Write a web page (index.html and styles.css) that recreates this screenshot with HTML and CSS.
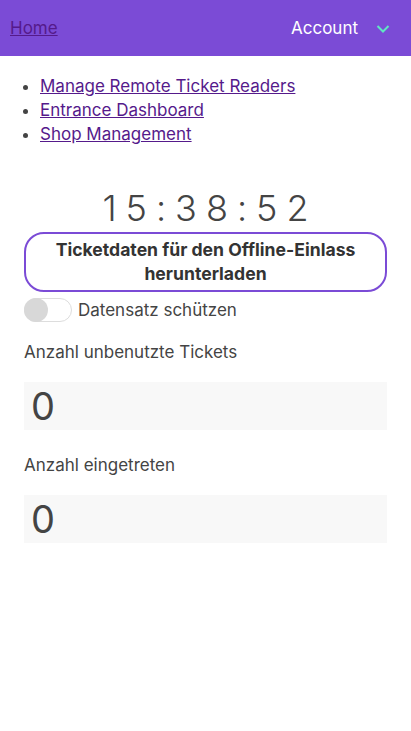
FILE: index.html
```html
<!DOCTYPE html>
<html lang="de">
<head>
<meta charset="utf-8">
<link rel="stylesheet" href="styles.css">
</head>
<body>
<header class="topbar">
  <a class="home" href="#">Home</a>
  <div class="account">
    <span>Account</span>
    <svg class="chev" width="14" height="10" viewBox="0 0 14 10"><path d="M1.5 2 L7 7.5 L12.5 2" fill="none" stroke="#5fe6c3" stroke-width="2"/></svg>
  </div>
</header>
<main class="content">
  <ul class="links">
    <li><a href="#">Manage Remote Ticket Readers</a></li>
    <li><a href="#">Entrance Dashboard</a></li>
    <li><a href="#">Shop Management</a></li>
  </ul>
  <div class="clock">15:38:52</div>
  <button class="dl">Ticketdaten für den Offline-Einlass herunterladen</button>
  <label class="toggle-row">
    <span class="toggle"><span class="knob"></span></span>
    <span>Datensatz schützen</span>
  </label>
  <div class="field">
    <div class="label">Anzahl unbenutzte Tickets</div>
    <div class="value">0</div>
  </div>
  <div class="field">
    <div class="label">Anzahl eingetreten</div>
    <div class="value">0</div>
  </div>
</main>
</body>
</html>
```
FILE: styles.css
```css
* { box-sizing: border-box; }
body {
  margin: 0;
  font-family: Inter, "Noto Sans", sans-serif;
  color: #444;
  background: #fff;
}
.topbar {
  height: 56px;
  background: #7b4bd6;
  display: flex;
  align-items: center;
  justify-content: space-between;
  padding: 0 21px 0 10px;
}
.home {
  color: #551a8b;
  font-size: 17px;
}
.account {
  display: flex;
  align-items: center;
  gap: 18px;
  color: #fff;
  font-size: 17px;
}
.chev { display: block; margin-top: 1px; }
.content { padding: 0 24px; }
.links {
  margin: 18px 0 0;
  padding-left: 16px;
  font-size: 17px;
  line-height: 24px;
}
.links a { color: #551a8b; }
.clock {
  margin-top: 40px;
  text-align: center;
  font-size: 36px;
  font-weight: 300;
  letter-spacing: 9px;
  text-indent: 9px;
  line-height: 44px;
  color: #444;
}
.dl {
  display: block;
  width: 100%;
  margin-top: 2px;
  height: 60px;
  border: 2px solid #7b4bd6;
  border-radius: 20px;
  background: #fff;
  font-family: inherit;
  font-weight: 700;
  font-size: 17.6px;
  line-height: 24px;
  color: #333;
  padding: 4px 20px;
}
.toggle-row {
  display: flex;
  align-items: center;
  gap: 6px;
  margin-top: 6px;
  font-size: 17px;
  color: #444;
}
.toggle {
  width: 48px;
  height: 24px;
  border-radius: 12px;
  border: 1px solid #ddd;
  background: #fff;
  position: relative;
  display: block;
}
.knob {
  position: absolute;
  left: -1px;
  top: -1px;
  width: 24px;
  height: 24px;
  border-radius: 50%;
  background: #d8d8d8;
}
.field { margin-top: 18px; }
.label {
  font-size: 17px;
  line-height: 24px;
  color: #444;
}
.value {
  margin-top: 18px;
  height: 48px;
  background: #f8f8f8;
  font-size: 38px;
  line-height: 48px;
  padding-left: 7px;
  color: #444;
}
.field + .field { margin-top: 23px; }
```
